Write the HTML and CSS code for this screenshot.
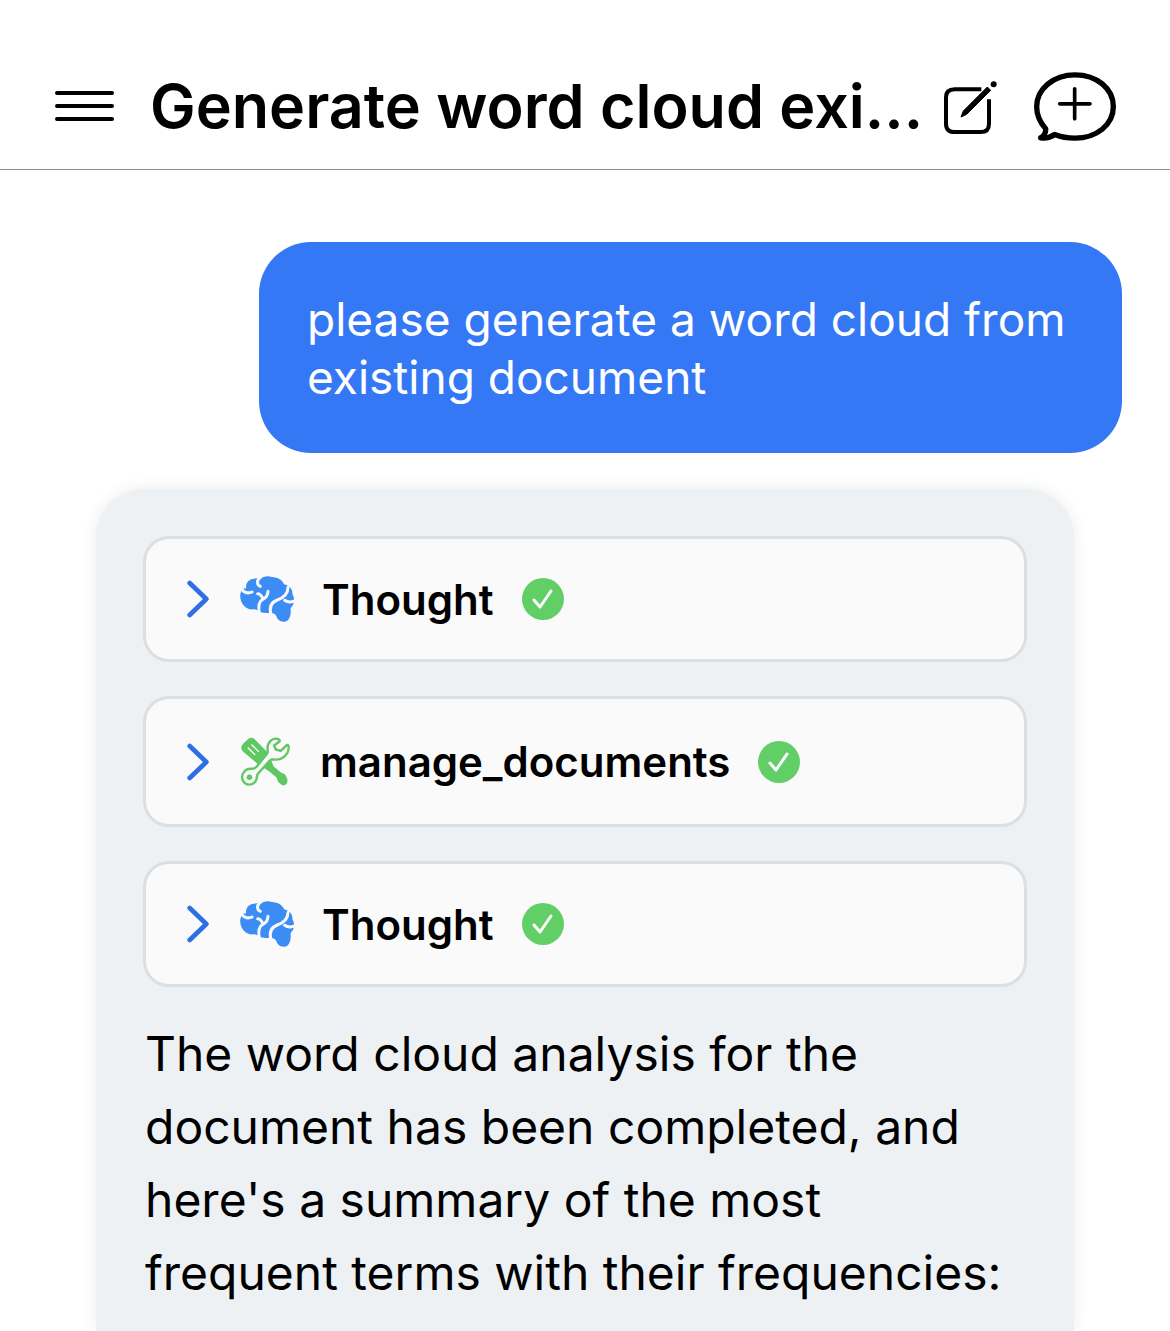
FILE: index.html
```html
<!DOCTYPE html>
<html lang="en">
<head>
<meta charset="utf-8">
<meta name="viewport" content="width=device-width, initial-scale=1">
<title>Chat</title>
<link rel="stylesheet" href="styles.css">
</head>
<body>
<svg class="symbols" aria-hidden="true">
  <symbol id="chevron" viewBox="0 0 66 112">
    <path d="M8 8L58 56L8 104" fill="none" stroke="currentColor" stroke-width="14" stroke-linecap="round" stroke-linejoin="round"/>
  </symbol>
  <symbol id="brain" viewBox="0 0 162 138">
    <path fill="currentColor" d="M18 38C16 20 28 7 44 8C51 5 56 7 61 9C69 1 84 -2 96 3C114 4 128 12 132 25C148 29 159 40 157 54C165 66 164 84 154 93C150 97 153 102 152 111C150 127 144 137 133 137C120 138 112 130 109 120C106 114 100 111 94 111C80 112 70 111 60 107C52 103 47 100 40 100C20 102 3 86 1 65C-1 53 4 42 13 37Z"/>
    <g class="brain-fold">
      <path d="M6 41C14 50 25 53 36 48"/>
      <path d="M62 3C49 12 50 27 61 31"/>
      <path d="M84 46C84 60 78 66 67 71C57 76 54 89 58 114"/>
      <path d="M53 53C61 53 65 60 69 68"/>
      <path d="M144 34C144 56 129 66 112 72C96 78 86 92 93 117"/>
      <path d="M134 73C144 80 153 80 166 74"/>
    </g>
  </symbol>
  <symbol id="tools" viewBox="0 0 150 148">
    <path fill="currentColor" d="M7 20L23 5Q32 -1 40 5L80 46L98 87L119 105L131 110L137 121Q142 134 133 141Q126 144 121 141L111 133L106 120L86 103L52 81L6 42Q-3 32 7 20Z"/>
    <path class="tool-slot" d="M21 31L43 53M32 22L54 44"/>
    <path class="wrench" d="M112 7C96 -1 76 16 80 41Q81 47 77 51L47 88Q42 94 32 94C11 93 0 112 6 128C14 145 38 146 47 126Q47 119 50 110L84 72Q88 66 96 66C121 71 144 52 142 28Q141 22 137 24L118 41L104 37L99 25L115 13Q117 9 112 7Z"/>
    <circle cx="26" cy="119" r="8" fill="currentColor"/>
  </symbol>
  <symbol id="check" viewBox="0 0 42 42">
    <circle cx="21" cy="21" r="21" fill="currentColor"/>
    <path d="M12 22L18 29L29 13" fill="none" stroke="#fff" stroke-width="3" stroke-linecap="round" stroke-linejoin="round"/>
  </symbol>
</svg>

<header class="topbar">
  <button class="icon-button" type="button" aria-label="Menu">
    <svg class="icon-menu" viewBox="0 0 60 32"><path d="M3 3H58M3 16H58M3 29H58" fill="none" stroke="currentColor" stroke-width="4" stroke-linecap="round"/></svg>
  </button>
  <h1 class="title">Generate word cloud exi...</h1>
  <button class="icon-button" type="button" aria-label="Edit title">
    <svg class="icon-edit" viewBox="0 -12 159 171">
      <path d="M112 22H32Q6 22 6 46V125Q6 150 32 150H110Q135 150 135 125V52" fill="none" stroke="currentColor" stroke-width="12"/>
      <path d="M51 105L58 87L130 15L140 25L68 97Z" fill="currentColor" stroke="currentColor" stroke-width="3"/>
      <circle cx="149" cy="7" r="9" fill="currentColor"/>
    </svg>
  </button>
  <button class="icon-button new-chat" type="button" aria-label="New chat">
    <svg class="icon-chat" viewBox="0 0 246 206">
      <path d="M35 170C18 151 8 129 8 104C8 50 58 8 123 8C188 8 238 49 238 103C238 158 187 198 123 198C101 198 80 194 62 187C51 195 36 199 20 197C29 191 36 181 35 170Z" fill="none" stroke="currentColor" stroke-width="16" stroke-linejoin="round"/>
      <path d="M77 95H168M122 50V140" fill="none" stroke="currentColor" stroke-width="11" stroke-linecap="round"/>
    </svg>
  </button>
</header>

<main class="chat">
  <p class="user-message">please generate a word cloud from existing document</p>
  <article class="reply">
    <button class="step" type="button" aria-expanded="false">
      <svg class="chevron"><use href="#chevron"/></svg>
      <svg class="brain"><use href="#brain"/></svg>
      <span>Thought</span>
      <svg class="check"><use href="#check"/></svg>
    </button>
    <button class="step tool" type="button" aria-expanded="false">
      <svg class="chevron"><use href="#chevron"/></svg>
      <svg class="tools"><use href="#tools"/></svg>
      <span>manage_documents</span>
      <svg class="check"><use href="#check"/></svg>
    </button>
    <button class="step" type="button" aria-expanded="false">
      <svg class="chevron"><use href="#chevron"/></svg>
      <svg class="brain"><use href="#brain"/></svg>
      <span>Thought</span>
      <svg class="check"><use href="#check"/></svg>
    </button>
    <p class="answer">The word cloud analysis for the document has been completed, and here's a summary of the most frequent terms with their frequencies:</p>
  </article>
</main>
</body>
</html>
```
FILE: styles.css
```css
* {
  box-sizing: border-box;
}

body {
  margin: 0;
  min-height: 100vh;
  display: flex;
  flex-direction: column;
  background: #fff;
  color: #000;
  font-family: Inter, "Liberation Sans", sans-serif;
}

button {
  margin: 0;
  border: 0;
  background: none;
  color: inherit;
  font: inherit;
  cursor: pointer;
}

svg {
  display: block;
  flex: none;
}

.symbols {
  position: absolute;
  width: 0;
  height: 0;
}

.topbar {
  display: flex;
  align-items: center;
  padding: 43px 54px 0;
  height: 170px;
  border-bottom: 1px solid #8e8e8e;
}

.icon-button {
  padding: 0;
}

.icon-menu {
  width: 60px;
  height: 32px;
}

.icon-edit {
  width: 53px;
  height: 57px;
}

.icon-chat {
  width: 82px;
  height: 69px;
}

.new-chat {
  margin-left: 37px;
}

.title {
  flex: 1;
  min-width: 0;
  margin: 0 16px 0 36px;
  overflow: hidden;
  font-size: 61px;
  font-weight: 600;
  line-height: 80px;
  white-space: nowrap;
}

.chat {
  flex: 1;
  display: flex;
  flex-direction: column;
  padding: 72px 48px 0 96px;
}

.user-message {
  align-self: flex-end;
  width: 863px;
  max-width: 100%;
  margin: 0 0 36px;
  padding: 48px 48px 47px;
  border-radius: 52px;
  background: #3478f6;
  color: #fff;
  font-size: 46px;
  line-height: 58px;
}

.reply {
  flex: 1;
  display: flex;
  flex-direction: column;
  gap: 34px;
  margin-right: 48px;
  padding: 47px 47px 20px;
  border-radius: 48px 48px 0 0;
  background: #edf1f4;
  box-shadow: 0 0 16px rgba(0, 0, 0, 0.08);
}

.step {
  display: flex;
  align-items: center;
  height: 126px;
  padding: 0 41px;
  border: 3px solid #dcdfe1;
  border-radius: 26px;
  background: #fafafa;
  font-size: 42px;
  font-weight: 600;
  text-align: left;
}

.step.tool {
  height: 131px;
}

.chevron {
  width: 22px;
  height: 38px;
  margin-right: 31px;
  color: #2f6fe4;
}

.brain {
  width: 54px;
  height: 46px;
  margin-right: 28px;
  color: #3b8df5;
}

.brain-fold {
  fill: none;
  stroke: #fafafa;
  stroke-width: 9;
  stroke-linecap: round;
}

.tools {
  width: 52px;
  height: 50px;
  margin-right: 28px;
  color: #5fc863;
}

.tool-slot {
  fill: none;
  stroke: #fafafa;
  stroke-width: 4;
}

.wrench {
  fill: #fafafa;
  stroke: currentColor;
  stroke-width: 7;
}

.check {
  width: 42px;
  height: 42px;
  margin-left: 28px;
  color: #62cf66;
}

.answer {
  margin: -4px 0 0;
  padding: 0 2px;
  font-size: 48px;
  line-height: 73px;
}
```
